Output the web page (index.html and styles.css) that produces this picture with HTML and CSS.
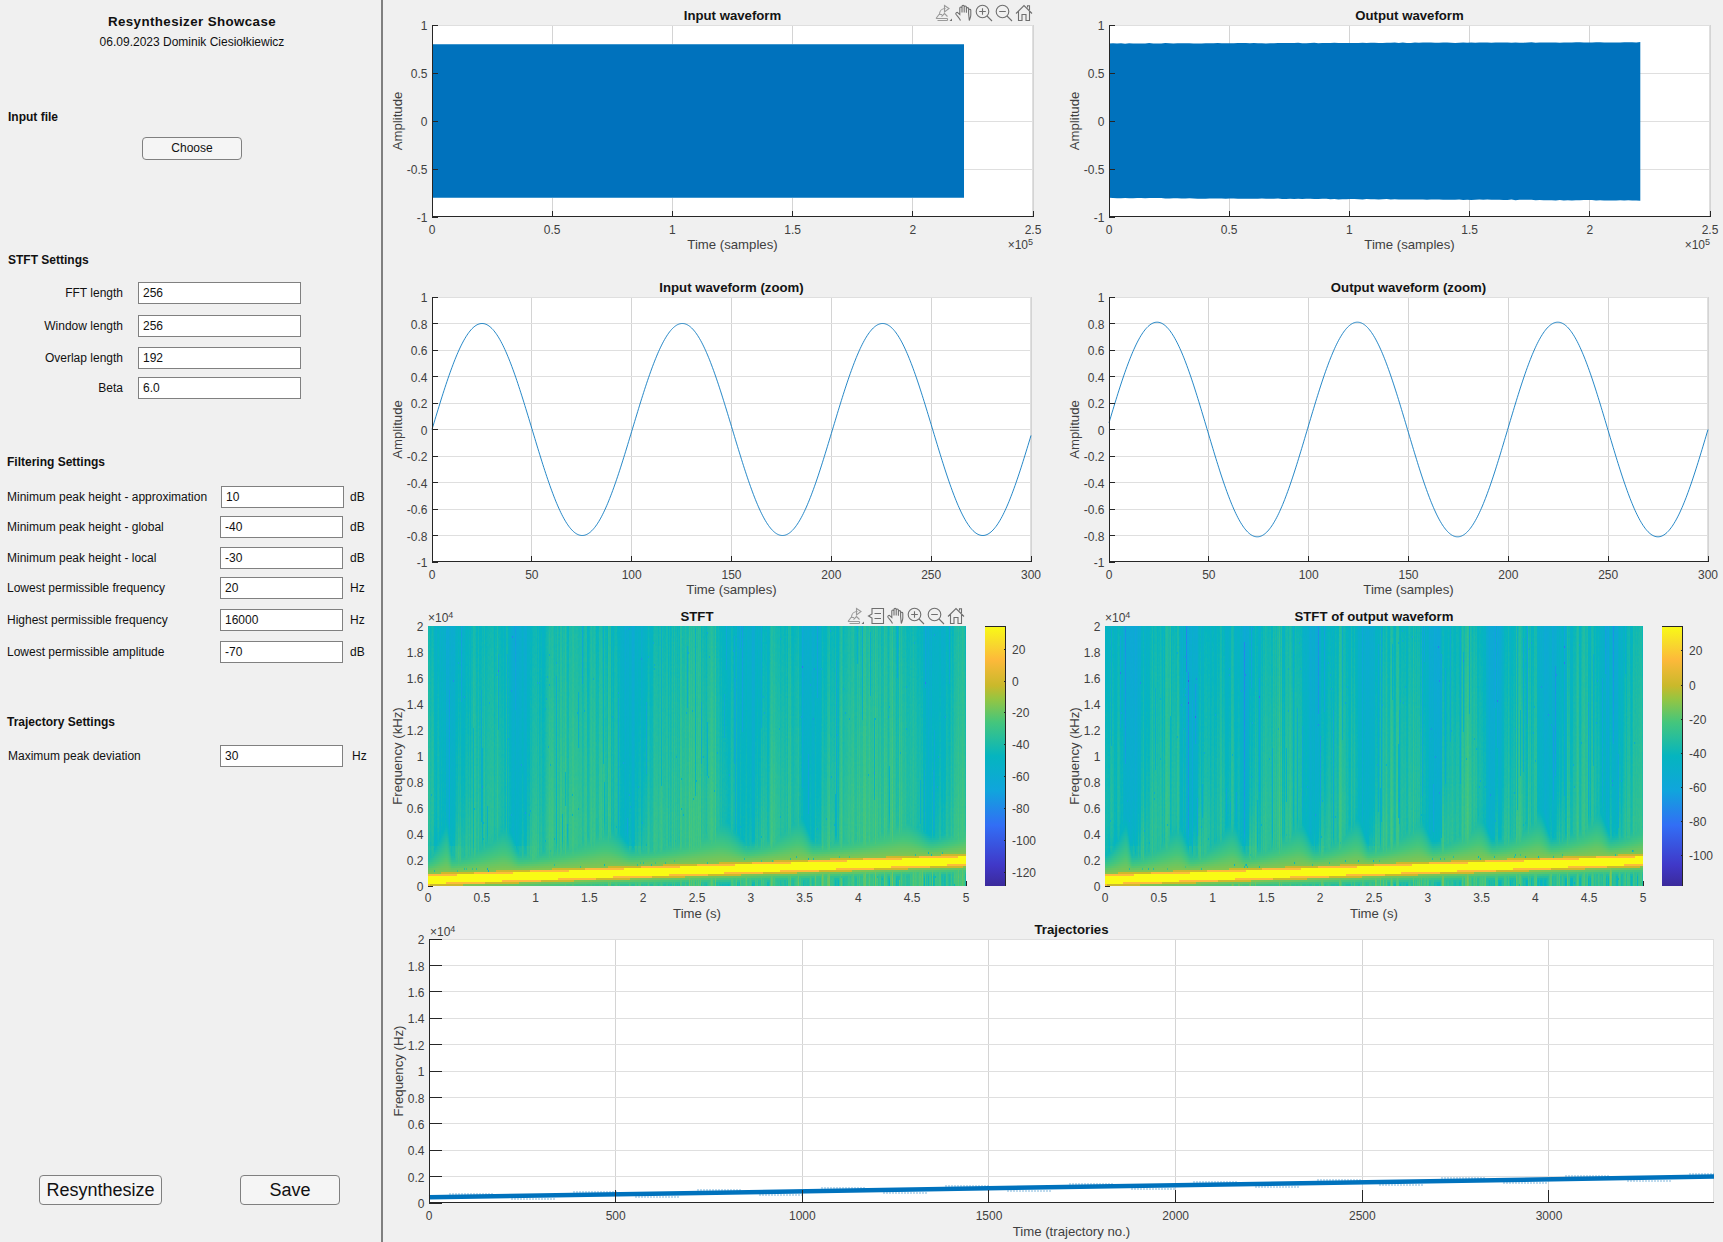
FILE: index.html
```html
<!DOCTYPE html>
<html lang="en">
<head>
<meta charset="utf-8">
<title>Resynthesizer Showcase</title>
<link rel="stylesheet" href="styles.css">
</head>
<body>
<svg class="defs" aria-hidden="true">
  <symbol id="i-export" viewBox="0 0 18 18">
    <path class="soft" d="M1 14.5 4 10.5H7M1 14.5H12.5M2.5 16.5H12.5M12.5 14.5V16.5M4.5 10.5C4.5 7 7 4.5 10.5 4.5"/>
    <path class="soft" d="M9.5 1.5 14 4.5 9.5 8ZM6.5 12.5 9.5 9.5 12.5 12.5"/>
    <path class="mark" d="M17 14.5V17H14.5Z"/>
  </symbol>
  <symbol id="i-tip" viewBox="0 0 18 18">
    <path d="M5 1.5H16.5V16.5H5V11L1.5 9 5 7ZM7.5 6.5H14M7.5 11.5H14"/>
  </symbol>
  <symbol id="i-hand" viewBox="0 0 18 18">
    <path d="M5.5 16.5C4.5 14 2.5 12.5 1 10.2 .4 9 2 7.8 3 8.8L4.8 10.5V4C4.8 2.7 7 2.7 7 4V8.5M7 8.5V2.3C7 1 9.2 1 9.2 2.3V8.5M9.2 8.5V3C9.2 1.7 11.4 1.7 11.4 3V8.7M11.4 8.7V4.6C11.4 3.3 13.6 3.3 13.6 4.6V9.5M13.6 9.5V6.2C13.6 5 15.8 5 15.8 6.2V11C15.8 13.2 14.7 14.8 14.3 16.5Z"/>
  </symbol>
  <symbol id="i-plus" viewBox="0 0 18 18">
    <circle cx="7.5" cy="7.5" r="6.3"/>
    <path d="M12 12 17 17M4.2 7.5H10.8M7.5 4.2V10.8"/>
  </symbol>
  <symbol id="i-minus" viewBox="0 0 18 18">
    <circle cx="7.5" cy="7.5" r="6.3"/>
    <path d="M12 12 17 17M4.2 7.5H10.8"/>
  </symbol>
  <symbol id="i-home" viewBox="0 0 18 18">
    <path d="M1 9.5 9 1.5 17 9.5M3.5 7.5V16.5H7V10.5H11V16.5H14.5V7.5M12.5 3.5V1.8H14.5V6"/>
  </symbol>
</svg>

<div class="app">
  <aside class="side">
    <h1 class="app-title">Resynthesizer Showcase</h1>
    <p class="app-sub">06.09.2023 Dominik Ciesiołkiewicz</p>

    <h2 class="heading heading-input">Input file</h2>
    <button class="btn btn-choose" type="button">Choose</button>

    <h2 class="heading heading-stft">STFT Settings</h2>
    <div class="row stft-row gap-14"><span class="row-label">FFT length</span><div class="field">256</div></div>
    <div class="row stft-row gap-11"><span class="row-label">Window length</span><div class="field">256</div></div>
    <div class="row stft-row gap-10"><span class="row-label">Overlap length</span><div class="field">192</div></div>
    <div class="row stft-row gap-8"><span class="row-label">Beta</span><div class="field">6.0</div></div>

    <h2 class="heading heading-filter">Filtering Settings</h2>
    <div class="row param-row gap-16 nudged"><span class="row-label">Minimum peak height - approximation</span><div class="field">10</div><span class="unit">dB</span></div>
    <div class="row param-row gap-8"><span class="row-label">Minimum peak height - global</span><div class="field">-40</div><span class="unit">dB</span></div>
    <div class="row param-row gap-9"><span class="row-label">Minimum peak height - local</span><div class="field">-30</div><span class="unit">dB</span></div>
    <div class="row param-row gap-8"><span class="row-label">Lowest permissible frequency</span><div class="field">20</div><span class="unit">Hz</span></div>
    <div class="row param-row gap-10"><span class="row-label">Highest permissible frequency</span><div class="field">16000</div><span class="unit">Hz</span></div>
    <div class="row param-row gap-10"><span class="row-label">Lowest permissible amplitude</span><div class="field">-70</div><span class="unit">dB</span></div>

    <h2 class="heading heading-traj">Trajectory Settings</h2>
    <div class="row param-row gap-15 traj-row"><span class="row-label">Maximum peak deviation</span><div class="field">30</div><span class="unit">Hz</span></div>

    <div class="actions">
      <button class="btn btn-big btn-run" type="button">Resynthesize</button>
      <button class="btn btn-big btn-save" type="button">Save</button>
    </div>
  </aside>

  <main class="plots">
    <section class="plot" data-plot="input">
      <div class="toolbar toolbar-wave">
        <svg class="tool"><use href="#i-export"/></svg>
        <svg class="tool"><use href="#i-hand"/></svg>
        <svg class="tool"><use href="#i-plus"/></svg>
        <svg class="tool"><use href="#i-minus"/></svg>
        <svg class="tool"><use href="#i-home"/></svg>
      </div>
    </section>
    <section class="plot" data-plot="output"></section>
    <section class="plot" data-plot="inputZoom"></section>
    <section class="plot" data-plot="outputZoom"></section>
    <section class="plot" data-plot="stft">
      <div class="toolbar toolbar-stft">
        <svg class="tool"><use href="#i-export"/></svg>
        <svg class="tool"><use href="#i-tip"/></svg>
        <svg class="tool"><use href="#i-hand"/></svg>
        <svg class="tool"><use href="#i-plus"/></svg>
        <svg class="tool"><use href="#i-minus"/></svg>
        <svg class="tool"><use href="#i-home"/></svg>
      </div>
    </section>
    <section class="plot" data-plot="stftOut"></section>
    <section class="plot plot-wide" data-plot="traj"></section>
  </main>
</div>
<script src="app.js"></script>
</body>
</html>
```
FILE: styles.css
```css
* { box-sizing: border-box; }
html, body { margin: 0; padding: 0; }
body {
  width: 1723px;
  height: 1242px;
  overflow: hidden;
  background: #f0f0f0;
  color: #111;
  font-family: "Liberation Sans", Arial, sans-serif;
  font-size: 12px;
}
.defs { position: absolute; width: 0; height: 0; }
.app { display: flex; width: 1723px; height: 1242px; }

/* Control panel */
.side {
  flex: none;
  width: 383px;
  height: 1242px;
  display: flex;
  flex-direction: column;
  padding-top: 14px;
  border-right: 2px solid #808080;
}
.app-title {
  margin: 0;
  font-size: 13.33px;
  line-height: 16px;
  font-weight: 700;
  text-align: center;
  padding-left: 3px;
  letter-spacing: .4px;
}
.app-sub {
  margin: 4px 0 0;
  line-height: 16px;
  text-align: center;
  padding-left: 3px;
}
.heading {
  margin: 0;
  font-size: 12px;
  line-height: 16px;
  font-weight: 700;
  padding-left: 8px;
}
.heading-input { margin-top: 59px; }
.heading-stft { margin-top: 92px; }
.heading-filter { margin-top: 55px; padding-left: 7px; }
.heading-traj { margin-top: 51px; padding-left: 7px; }

.btn {
  font-family: inherit;
  color: #111;
  background: #f5f5f5;
  border: 1px solid #808080;
  border-radius: 4px;
  padding: 0;
}
.btn-choose {
  flex: none;
  width: 100px;
  height: 23px;
  margin: 12px 0 0 142px;
  padding-bottom: 2px;
  font-size: 12px;
}
.btn-big { height: 30px; font-size: 18px; }
.btn-run { width: 123px; }
.btn-save { width: 100px; margin-left: 78px; }
.actions {
  display: flex;
  margin-top: auto;
  padding: 0 0 37px 39px;
}

.row { display: flex; align-items: center; height: 22px; flex: none; }
.gap-8 { margin-top: 8px; }
.gap-9 { margin-top: 9px; }
.gap-10 { margin-top: 10px; }
.gap-11 { margin-top: 11px; }
.gap-14 { margin-top: 14px; }
.gap-15 { margin-top: 15px; }
.gap-16 { margin-top: 16px; }
.field {
  height: 22px;
  line-height: 20px;
  padding-left: 4px;
  background: #fff;
  border: 1px solid #808080;
  color: #111;
}
.stft-row .row-label { width: 123px; text-align: right; }
.stft-row .field { width: 163px; margin-left: 15px; }
.param-row { padding-left: 7px; }
.param-row .row-label { width: 213px; white-space: nowrap; }
.param-row .field { width: 123px; }
.unit { margin-left: 7px; }
.nudged .field { margin-left: 1px; }
.nudged .unit { margin-left: 6px; }
.traj-row .row-label { padding-left: 1px; }
.traj-row .unit { margin-left: 9px; }

/* Plots */
.plots {
  flex: 1;
  display: grid;
  grid-template-columns: 671px 669px;
  grid-template-rows: 275px 325px 325px 317px;
}
.plot { position: relative; }
.plot-wide { grid-column: 1 / 3; }
.chart { display: block; width: 100%; height: 100%; overflow: visible; }
.spectrogram { position: absolute; display: block; }

.toolbar { position: absolute; display: flex; gap: 2px; }
.toolbar-wave { top: 4px; right: 21px; }
.toolbar-stft { top: 7px; right: 89px; }
.tool { width: 18px; height: 18px; display: block; }
symbol path, symbol circle {
  fill: none;
  stroke: #6f6f6f;
  stroke-width: 1.1;
}
symbol path.soft { stroke: #9a9a9a; }
symbol path.mark { fill: #6f6f6f; stroke: none; }

.ax-face { fill: #fff; }
.grid-line { stroke: #dfdfdf; stroke-width: 1; shape-rendering: crispEdges; }
.grid-line-v { stroke: #d4d4d4; }
.ax-line { stroke: #262626; stroke-width: 1; shape-rendering: crispEdges; }
.trace { fill: none; stroke: #0072bd; stroke-width: .85; }
.trace-fill { fill: #0072bd; }
.trace-edge { fill: none; stroke: #3f95cd; stroke-width: 1; shape-rendering: crispEdges; }
.trace-thick { fill: none; stroke: #0072bd; stroke-width: 4.5; }
.trace-dash { fill: none; stroke: #0072bd; stroke-opacity: .5; stroke-width: 1; stroke-dasharray: 2 1; }
.tick-text { font: 12px "Liberation Sans", Arial, sans-serif; fill: #404040; }
.label-text { font: 13.2px "Liberation Sans", Arial, sans-serif; fill: #404040; text-anchor: middle; }
.title-text { font: 700 13.2px "Liberation Sans", Arial, sans-serif; fill: #141414; text-anchor: middle; }
.exp-small { font-size: 9px; }
```
FILE: app.js
```js
(function () {
  var NS = 'http://www.w3.org/2000/svg';

  function rng(seed) {
    return function () {
      seed = (seed + 0x6D2B79F5) | 0;
      var t = Math.imul(seed ^ (seed >>> 15), 1 | seed);
      t = (t + Math.imul(t ^ (t >>> 7), 61 | t)) ^ t;
      return ((t ^ (t >>> 14)) >>> 0) / 4294967296;
    };
  }

  var STOPS = [
    [0, [59, 42, 155]], [.08, [64, 56, 200]], [.233, [50, 110, 245]],
    [.367, [16, 165, 220]], [.5, [5, 181, 191]], [.63, [69, 198, 124]],
    [.72, [150, 197, 65]], [.77, [201, 185, 43]], [.87, [253, 185, 58]],
    [.93, [248, 216, 45]], [1, [249, 251, 21]]
  ];
  function parula(v) {
    v = Math.max(0, Math.min(1, v));
    for (var i = 1; i < STOPS.length; i++) {
      if (v <= STOPS[i][0]) {
        var a = STOPS[i - 1], b = STOPS[i], k = (v - a[0]) / (b[0] - a[0]);
        return [0, 1, 2].map(function (c) { return a[1][c] + (b[1][c] - a[1][c]) * k; });
      }
    }
    return STOPS[STOPS.length - 1][1];
  }

  function el(parent, name, attrs, text) {
    var n = document.createElementNS(NS, name);
    for (var k in attrs) n.setAttribute(k, attrs[k]);
    if (text !== undefined) n.textContent = text;
    parent.appendChild(n);
    return n;
  }
  function range(a, b, s) {
    var out = [], n = Math.round((b - a) / s);
    for (var i = 0; i <= n; i++) out.push(+(a + i * s).toFixed(3));
    return out;
  }
  function centered(parent, x, y, cls, str, anchor) {
    return el(parent, 'text', { x: x, y: y + 5.2, 'class': cls, 'text-anchor': anchor || 'middle' }, str);
  }
  function exponent(parent, x, y, power, anchor) {
    var t = el(parent, 'text', { x: x, y: y + 5, 'class': 'tick-text', 'text-anchor': anchor });
    el(t, 'tspan', {}, '\u00d710');
    el(t, 'tspan', { 'class': 'exp-small', dy: -4 }, power);
  }

  /* Draws axes; ax is in page pixels, origin is the cell's page position. */
  function axes(cell, o, cfg) {
    var svg = el(cell, 'svg', { 'class': 'chart' });
    cell.insertBefore(svg, cell.firstChild);
    var x0 = cfg.ax[0] - o[0], y0 = cfg.ax[1] - o[1], x1 = cfg.ax[2] - o[0], y1 = cfg.ax[3] - o[1];
    var w = x1 - x0, h = y1 - y0;
    var X = function (v) { return x0 + (v - cfg.xlim[0]) / (cfg.xlim[1] - cfg.xlim[0]) * w; };
    var Y = function (v) { return y1 - (v - cfg.ylim[0]) / (cfg.ylim[1] - cfg.ylim[0]) * h; };
    var snap = function (v) { return Math.round(v - .5) + .5; };
    var tl = Math.round(Math.max(w, h) * .01);

    if (cfg.grid !== false) {
      el(svg, 'rect', { x: x0, y: y0, width: w, height: h, 'class': 'ax-face' });
      cfg.xticks.forEach(function (v) {
        if (v === cfg.xlim[0]) return;
        el(svg, 'line', { x1: snap(X(v)), x2: snap(X(v)), y1: y0, y2: y1, 'class': 'grid-line grid-line-v' });
      });
      cfg.yticks.forEach(function (v) {
        if (v === cfg.ylim[0]) return;
        el(svg, 'line', { x1: x0, x2: x1, y1: snap(Y(v)), y2: snap(Y(v)), 'class': 'grid-line' });
      });
      el(svg, 'line', { x1: x1 - .5, x2: x1 - .5, y1: y0, y2: y1, 'class': 'grid-line' });
    }
    if (cfg.draw) cfg.draw(svg, X, Y, x0, y0, x1, y1);

    el(svg, 'line', { x1: x0 + .5, x2: x0 + .5, y1: y0, y2: y1, 'class': 'ax-line' });
    el(svg, 'line', { x1: x0, x2: x1, y1: y1 - .5, y2: y1 - .5, 'class': 'ax-line' });
    cfg.xticks.forEach(function (v) {
      el(svg, 'line', { x1: snap(X(v)), x2: snap(X(v)), y1: y1, y2: y1 - tl, 'class': 'ax-line' });
      centered(svg, X(v), y1 + cfg.xTickGap, 'tick-text', String(v));
    });
    cfg.yticks.forEach(function (v) {
      el(svg, 'line', { x1: x0, x2: x0 + tl, y1: snap(Y(v)), y2: snap(Y(v)), 'class': 'ax-line' });
      centered(svg, x0 - 4.5, Y(v), 'tick-text', String(v), 'end');
    });
    centered(svg, (x0 + x1) / 2, y0 - 10.5, 'title-text', cfg.title);
    centered(svg, (x0 + x1) / 2, y1 + cfg.xLabelGap, 'label-text', cfg.xlabel);
    var lx = x0 - cfg.yLabelGap, ly = (y0 + y1) / 2;
    el(svg, 'text', {
      x: 0, y: 0, 'class': 'label-text',
      transform: 'translate(' + (lx + 3.5) + ' ' + ly + ') rotate(-90)'
    }, cfg.ylabel);
    return svg;
  }

  function clamp01(v) { return Math.max(0, Math.min(1, v)); }

  function spectrogram(cell, o, ax, p) {
    var c = document.createElement('canvas');
    var W = ax[2] - ax[0], H = ax[3] - ax[1];
    c.width = W; c.height = H;
    c.className = 'spectrogram';
    c.style.left = (ax[0] - o[0]) + 'px';
    c.style.top = (ax[1] - o[1]) + 'px';
    cell.appendChild(c);
    var g = c.getContext('2d'), img = g.createImageData(W, H), r = rng(p.seed);
    var ROWS = 130, R = H / ROWS, x, y;

    var coarse = [], mid = [], fine = [], dark = [];
    for (x = 0; x < W + 12; x++) {
      if (x % 7 === 0) coarse[x] = r() - .5; else coarse[x] = coarse[x - 1];
      if (x % 3 === 0) mid[x] = r() - .5; else mid[x] = mid[x - 1];
      fine[x] = r() - .5;
      dark[x] = r() < p.darkRate ? [r() * ROWS, r() * 50 + 8] : null;
    }
    var cells = [];
    for (y = 0; y < ROWS; y++) {
      cells[y] = [];
      for (x = 0; x < W; x++) cells[y][x] = r();
    }

    for (x = 0; x < W; x++) {
      var t = 5 * x / W;
      var f0 = .04 + .03 * t, r0 = f0 / 2 * 129;
      var prev = 0, next = 5.2;
      p.bands.forEach(function (b) {
        if (b <= t && b > prev) prev = b;
        if (b > t && b < next) next = b;
      });
      var s = (t - prev) / (next - prev);
      var fall = clamp01((1 - s) / .28);
      var smooth = fall * fall * (3 - 2 * fall);
      var glow = 5 + 11 * Math.pow(s, 1.5) * smooth;
      for (var row = 0; row < ROWS; row++) {
        var f = row / 129 * 2;
        var bg = .535 + .055 * Math.min(1, (2 - f) / 1.5);
        var stripeAmp = f < f0 ? 1.8 : 1;
        bg += (coarse[x] * .022 + mid[x] * .06 + fine[x] * .04) * stripeAmp * p.contrast;
        bg += (cells[row][x] - .5) * .014;
        if (cells[row][x] < .002) bg -= .12;
        if (f > .16) {
          for (var i = 0; i < p.bands.length; i++) {
            var ctr = p.bands[i] - .14 * Math.exp(-(f - .2) / .2);
            var dd = (t - ctr) / p.bandWidth;
            bg -= .095 * p.contrast * Math.exp(-dd * dd) * (f < .3 ? .6 : 1);
          }
        }
        var dk = dark[x];
        if (dk && Math.abs(row - dk[0]) < dk[1]) bg -= .1;
        bg -= p.shift;

        var d = Math.abs(row - r0), v;
        var g2 = row < r0 ? 2.5 : glow;
        if (d < 1.9) v = 1;
        else if (d < 2.6) v = .875;
        else if (d < 3.2) v = .78;
        else v = .7 - .1 * (d - 3.2) / g2;
        if (row > r0 + 3.2 && row < r0 + 5.2 && cells[row][x] < .03) v = .45;
        var val = Math.max(bg, v);

        var col = parula(val);
        var py0 = Math.round((ROWS - 1 - row) * R), py1 = Math.round((ROWS - row) * R);
        for (var py = py0; py < py1; py++) {
          var idx = (py * W + x) * 4;
          img.data[idx] = col[0]; img.data[idx + 1] = col[1]; img.data[idx + 2] = col[2]; img.data[idx + 3] = 255;
        }
      }
    }
    g.putImageData(img, 0, 0);
  }

  function colorbar(svg, o, bar, id, ticks) {
    var defs = el(svg, 'defs', {});
    var lg = el(defs, 'linearGradient', { id: id, x1: 0, y1: 1, x2: 0, y2: 0 });
    STOPS.forEach(function (s) {
      el(lg, 'stop', { offset: s[0], 'stop-color': 'rgb(' + s[1].join(',') + ')' });
    });
    var x0 = bar[0] - o[0], x1 = bar[1] - o[0], y0 = bar[2] - o[1], y1 = bar[3] - o[1];
    el(svg, 'rect', { x: x0, y: y0, width: x1 - x0, height: y1 - y0, fill: 'url(#' + id + ')' });
    el(svg, 'line', { x1: x0, x2: x1, y1: y0 + .5, y2: y0 + .5, 'class': 'ax-line' });
    el(svg, 'line', { x1: x1 - .5, x2: x1 - .5, y1: y0, y2: y1, 'class': 'ax-line' });
    ticks.forEach(function (t) {
      var y = t[1] - o[1];
      el(svg, 'line', { x1: x1 - 2, x2: x1, y1: Math.round(y) + .5, y2: Math.round(y) + .5, 'class': 'ax-line' });
      centered(svg, x1 + 6, y, 'tick-text', String(t[0]), 'start');
    });
  }

  var cells = {};
  document.querySelectorAll('.plot').forEach(function (c) { cells[c.dataset.plot] = c; });
  var COL1 = 383, COL2 = 1054;

  function waveAxes(key, left, title, draw) {
    var o = [left === 432 ? COL1 : COL2, 0];
    var svg = axes(cells[key], o, {
      ax: [left, 25, left + 601, 217], xlim: [0, 2.5], ylim: [-1, 1],
      xticks: range(0, 2.5, .5), yticks: range(-1, 1, .5),
      title: title, xlabel: 'Time (samples)', ylabel: 'Amplitude',
      xTickGap: 11.5, xLabelGap: 27, yLabelGap: 34, draw: draw
    });
    exponent(svg, left + 601 - o[0], 244, '5', 'end');
  }
  waveAxes('input', 432, 'Input waveform', function (s, X, Y) {
    var end = X(2.213);
    el(s, 'rect', { x: X(0), y: Y(.8), width: end - X(0), height: Y(-.8) - Y(.8), 'class': 'trace-fill' });
    el(s, 'line', { x1: X(0), x2: end, y1: Math.round(Y(.8)) + .5, y2: Math.round(Y(.8)) + .5, 'class': 'trace-edge' });
    el(s, 'line', { x1: X(0), x2: end, y1: Math.round(Y(-.8)) - .5, y2: Math.round(Y(-.8)) - .5, 'class': 'trace-edge' });
  });
  waveAxes('output', 1109, 'Output waveform', function (s, X, Y) {
    var r = rng(77), top = [], bot = [];
    for (var i = 0; i <= 132; i++) {
      var v = i / 132 * 2.21, k = i / 132;
      top.push(X(v).toFixed(1) + ',' + Y(.805 + .012 * k + r() * .006).toFixed(1));
      bot.unshift(X(v).toFixed(1) + ',' + Y(-.8 - .025 * k - r() * .006).toFixed(1));
    }
    el(s, 'polygon', { points: top.concat(bot).join(' '), 'class': 'trace-fill' });
  });

  function sineAxes(key, left, title, fn) {
    var o = [left === 432 ? COL1 : COL2, 275];
    axes(cells[key], o, {
      ax: [left, 297, left + 599, 562], xlim: [0, 300], ylim: [-1, 1],
      xticks: range(0, 300, 50), yticks: range(-1, 1, .2),
      title: title, xlabel: 'Time (samples)', ylabel: 'Amplitude',
      xTickGap: 11.5, xLabelGap: 27, yLabelGap: 34,
      draw: function (s, X, Y) {
        var pts = [];
        for (var i = 0; i <= 600; i++) pts.push(X(i / 2).toFixed(2) + ',' + Y(fn(i / 2)).toFixed(2));
        el(s, 'polyline', { points: pts.join(' '), 'class': 'trace' });
      }
    });
  }
  var TAU = Math.PI * 2;
  sineAxes('inputZoom', 432, 'Input waveform (zoom)', function (x) { return .8 * Math.sin(TAU * x / 100.3); });
  sineAxes('outputZoom', 1109, 'Output waveform (zoom)', function (x) { return .81 * Math.sin(TAU * x / 100.33 + .062); });

  function stftAxes(key, left, title, bar, ticks, p, id) {
    var o = [left === 428 ? COL1 : COL2, 600];
    var ax = [left, 626, left + 538, 886];
    var svg = axes(cells[key], o, {
      ax: ax, xlim: [0, 5], ylim: [0, 2], grid: false,
      xticks: range(0, 5, .5), yticks: range(0, 2, .2),
      title: title, xlabel: 'Time (s)', ylabel: 'Frequency (kHz)',
      xTickGap: 11, xLabelGap: 27, yLabelGap: 30
    });
    exponent(svg, left - o[0], 617 - o[1], '4', 'start');
    colorbar(svg, o, bar, id, ticks);
    var tb = cells[key].querySelector('.toolbar');
    spectrogram(cells[key], o, ax, p);
    if (tb) cells[key].appendChild(tb);
  }
  stftAxes('stft', 428, 'STFT', [985, 1006, 626, 886],
    [[20, 649], [0, 680.5], [-20, 712], [-40, 744], [-60, 776], [-80, 808], [-100, 840], [-120, 871.5]],
    { seed: 11, bands: [.22, .85, 1.9, 2.97, 3.58, 4.68], bandWidth: .16, contrast: 1, shift: 0, darkRate: .09 }, 'cb1');
  stftAxes('stftOut', 1105, 'STFT of output waveform', [1662, 1683, 626, 886],
    [[20, 650], [0, 685], [-20, 719], [-40, 753], [-60, 787], [-80, 821], [-100, 855]],
    { seed: 29, bands: [.25, .8, 1.3, 1.95, 2.45, 3.05, 3.6, 4.15, 4.7], bandWidth: .12, contrast: 1.15, shift: .012, darkRate: .12 }, 'cb2');

  axes(cells.traj, [COL1, 925], {
    ax: [429, 939, 1714, 1203], xlim: [0, 3442], ylim: [0, 2],
    xticks: range(0, 3000, 500), yticks: range(0, 2, .2),
    title: 'Trajectories', xlabel: 'Time (trajectory no.)', ylabel: 'Frequency (Hz)',
    xTickGap: 12, xLabelGap: 28, yLabelGap: 30,
    draw: function (s, X, Y, x0, y0, x1) {
      var ya = Y(.043), yb = Y(.2);
      var at = function (x) { return ya + (yb - ya) * (x - x0) / (x1 - x0); };
      var seg = 0;
      for (var x = x0 + 20; x < x1 - 20; x += 62) {
        var off = seg % 2 ? 3 : -3;
        el(s, 'line', {
          x1: x, x2: Math.min(x + 44, x1),
          y1: at(x) + off, y2: at(x) + off, 'class': 'trace-dash'
        });
        seg++;
      }
      el(s, 'line', { x1: x0, x2: x1, y1: ya, y2: yb, 'class': 'trace-thick' });
    }
  });
  var trajSvg = cells.traj.querySelector('svg');
  exponent(trajSvg, 430 - COL1, 931 - 925, '4', 'start');
})();
```
